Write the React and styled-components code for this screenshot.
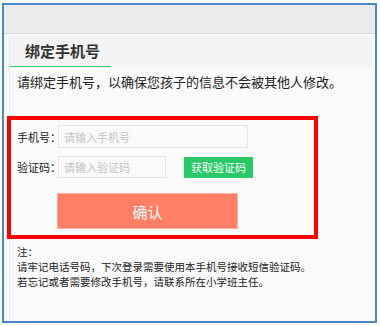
import React from "react";
import styled, { createGlobalStyle } from "styled-components";

const Global = createGlobalStyle`
  body {
    margin: 0;
    background: #fff;
    font-family: "Noto Sans CJK SC", "Noto Sans", sans-serif;
    color: #333;
  }
  * { box-sizing: border-box; }
`;

const Frame = styled.div`
  width: 375px;
  height: 320px;
  margin: 3px 0 0 2px;
  border: 2px solid #4a87c8;
  background: #fbfbfb;
  display: flex;
  flex-direction: column;
`;

const TopBar = styled.div`
  height: 29px;
  flex: none;
  background: #ebebeb;
  border-bottom: 1px solid #d9d9d9;
`;

const Body = styled.div`
  flex: 1;
  display: flex;
  padding: 2px 2px 0 5px;
`;

const Panel = styled.div`
  flex: 1;
  background: #fafafa;
  border-left: 1px solid #ebebeb;
  display: flex;
  flex-direction: column;
`;

const PanelHead = styled.div`
  height: 31px;
  background: #f4f4f4;
  display: flex;
`;

const Tab = styled.div`
  width: 101px;
  padding-left: 15px;
  border-bottom: 1px solid #2ecc71;
  font-size: 15px;
  font-weight: bold;
  line-height: 30px;
  color: #333;
`;

const Intro = styled.p`
  margin: 5px 0 0 7px;
  font-size: 13px;
  line-height: 20px;
  color: #222;
  white-space: nowrap;
`;

const Marked = styled.div`
  width: 311px;
  height: 123px;
  margin: 24px 0 0 -3px;
  border: 4px solid #ff0000;
  padding: 5px 0 0 6px;
  display: flex;
  flex-direction: column;
  gap: 8px;
`;

const Row = styled.div`
  display: flex;
  align-items: center;
`;

const Label = styled.span`
  width: 41px;
  flex: none;
  font-size: 11px;
  color: #222;
  white-space: nowrap;
`;

const Field = styled.input`
  width: ${(p) => p.$w}px;
  height: ${(p) => p.$h}px;
  border: 1px solid #e4e4e4;
  background: #fafafa;
  padding: 0 5px;
  font-family: inherit;
  font-size: 11px;
  outline: none;
  &::placeholder { color: #c4c4c4; }
`;

const CodeButton = styled.button`
  margin-left: 18px;
  width: 69px;
  height: 21px;
  border: none;
  background: #28c966;
  color: #fff;
  font-family: inherit;
  font-size: 11px;
  padding: 0;
`;

const Confirm = styled.button`
  margin: 7px 0 0 40px;
  width: 181px;
  height: 36px;
  border: 1px solid #ffb2a2;
  background: #ff7f66;
  color: #fff;
  font-family: inherit;
  font-size: 15px;
  padding: 0;
`;

const Notes = styled.div`
  margin: 5px 0 0 7px;
  font-size: 10.5px;
  line-height: 15px;
  color: #222;
`;

export default function App() {
  return (
    <>
      <Global />
      <Frame>
        <TopBar />
        <Body>
          <Panel>
            <PanelHead>
              <Tab>绑定手机号</Tab>
            </PanelHead>
            <Intro>请绑定手机号，以确保您孩子的信息不会被其他人修改。</Intro>
            <Marked>
              <Row>
                <Label>手机号：</Label>
                <Field $w={190} $h={23} placeholder="请输入手机号" />
              </Row>
              <Row>
                <Label>验证码：</Label>
                <Field $w={108} $h={22} placeholder="请输入验证码" />
                <CodeButton>获取验证码</CodeButton>
              </Row>
              <Row>
                <Confirm>确认</Confirm>
              </Row>
            </Marked>
            <Notes>
              <div>注：</div>
              <div>请牢记电话号码，下次登录需要使用本手机号接收短信验证码。</div>
              <div>若忘记或者需要修改手机号，请联系所在小学班主任。</div>
            </Notes>
          </Panel>
        </Body>
      </Frame>
    </>
  );
}
